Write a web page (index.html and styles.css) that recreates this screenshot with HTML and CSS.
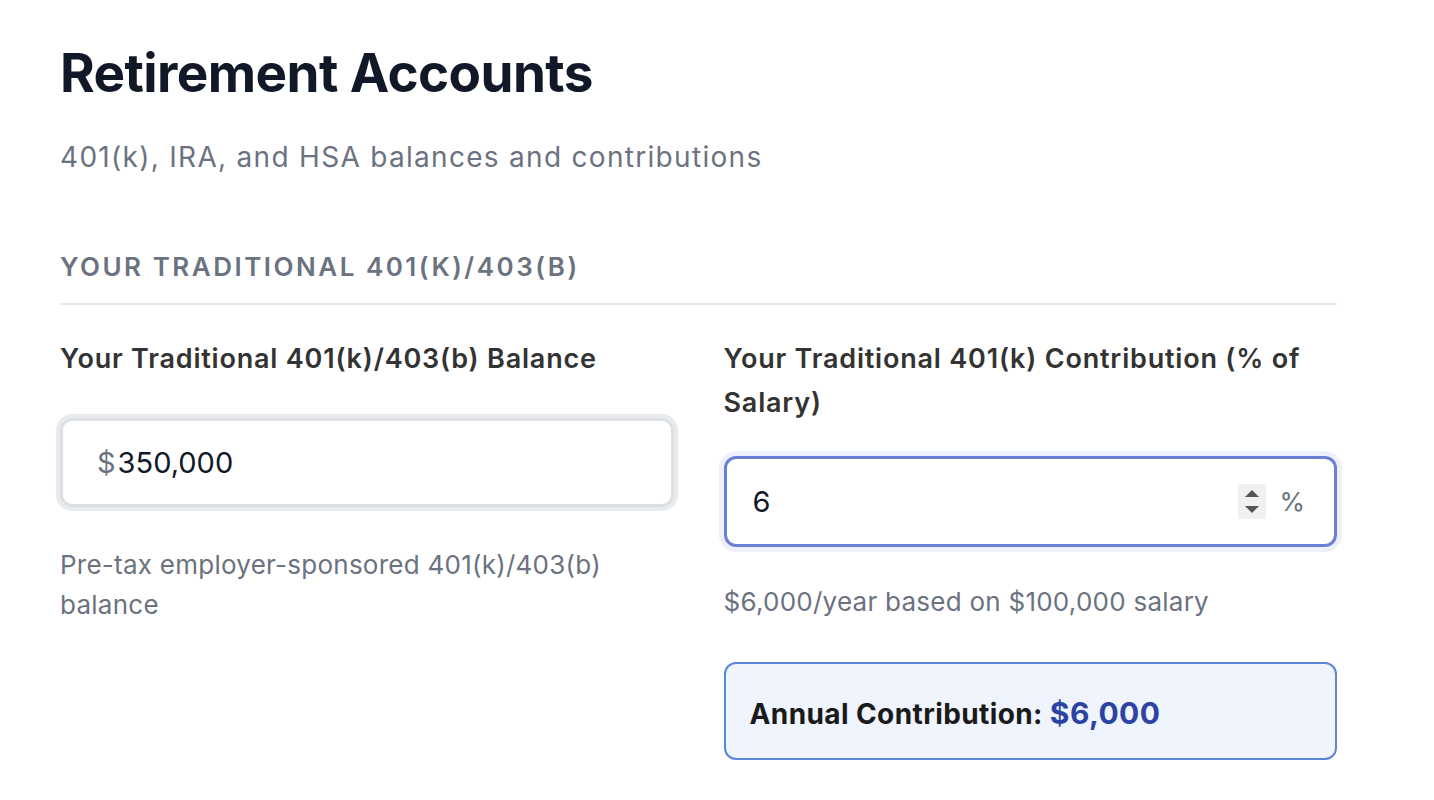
FILE: index.html
```html
<!DOCTYPE html>
<html>
    <head>
        <meta charset="utf-8" />
        <title>Retirement Accounts</title>
        <meta name="viewport" content="width=device-width, initial-scale=1">
        <link rel="stylesheet" href="styles.css">
    </head>
    <body>
        <main class="page">
            <h1 class="page-title">Retirement Accounts</h1>
            <p class="page-sub">401(k), IRA, and HSA balances and contributions</p>

            <section class="group">
                <h2 class="group-title">Your Traditional 401(k)/403(b)</h2>
                <div class="fields">
                    <div class="field">
                        <label class="field-label">Your Traditional 401(k)/403(b) Balance</label>
                        <div class="input-box">
                            <span class="prefix">$</span>
                            <span class="value">350,000</span>
                        </div>
                        <p class="hint">Pre-tax employer-sponsored 401(k)/403(b) balance</p>
                    </div>
                    <div class="field">
                        <label class="field-label">Your Traditional 401(k) Contribution (% of Salary)</label>
                        <div class="input-box focused">
                            <span class="value">6</span>
                            <span class="spinner">
                                <svg width="28" height="35" viewBox="0 0 28 35"><path d="M7 13 L21 13 L14 6 Z" fill="#555"/><path d="M7 22 L21 22 L14 29 Z" fill="#555"/></svg>
                            </span>
                            <span class="suffix">%</span>
                        </div>
                        <p class="hint">$6,000/year based on $100,000 salary</p>
                        <div class="result">Annual Contribution: <span class="result-amount">$6,000</span></div>
                    </div>
                </div>
            </section>
        </main>
    </body>
</html>
```

FILE: styles.css
```css
body {
    margin: 0;
    background: #ffffff;
    font-family: Inter, "Noto Sans", sans-serif;
    color: #111827;
}

.page {
    width: 1277px;
    padding: 41px 0 0 60px;
}

.page-title {
    margin: 0;
    font-size: 53px;
    line-height: 64px;
    font-weight: 700;
    color: #111827;
    letter-spacing: -0.6px;
}

.page-sub {
    margin: 32px 0 0;
    font-size: 28px;
    line-height: 40px;
    letter-spacing: 1.3px;
    color: #6b7280;
}

.group {
    margin-top: 74px;
}

.group-title {
    margin: 0;
    padding-bottom: 20px;
    border-bottom: 2px solid #e5e7eb;
    font-size: 26px;
    line-height: 32px;
    font-weight: 600;
    letter-spacing: 2.5px;
    text-transform: uppercase;
    color: #6b7280;
}

.fields {
    display: grid;
    grid-template-columns: 1fr 1fr;
    column-gap: 50px;
    padding-top: 32px;
}

.field-label {
    display: block;
    font-size: 27px;
    line-height: 44px;
    font-weight: 600;
    letter-spacing: 0.8px;
    color: #333333;
}

.input-box {
    display: flex;
    align-items: center;
    height: 89px;
    margin-top: 37px;
    padding: 0 30px 0 34px;
    box-sizing: border-box;
    border: 3px solid #dcdfe4;
    border-radius: 12px;
    box-shadow: 0 0 0 4px #e8eaee;
    font-size: 29px;
}

.input-box.focused {
    height: 91px;
    margin-top: 31px;
    padding: 0 29px 0 26px;
    border: 3px solid #6b7fd7;
    box-shadow: 0 0 0 5px #eef1fb;
}

.prefix {
    color: #6b7280;
    margin-right: 2px;
}

.value {
    flex: 1;
    color: #111827;
}

.spinner {
    display: flex;
    width: 28px;
    height: 35px;
    background: #f0f0f0;
    margin-right: 13px;
}

.suffix {
    color: #6b7280;
    font-size: 26px;
}

.hint {
    margin: 38px 0 0;
    font-size: 26px;
    line-height: 40px;
    letter-spacing: 0.25px;
    color: #6b7280;
}

.focused + .hint {
    margin-top: 35px;
}

.result {
    margin-top: 40px;
    height: 98px;
    box-sizing: border-box;
    padding: 0 24px;
    background: #eff4fd;
    border: 2px solid #5b86d6;
    border-radius: 12px;
    font-size: 28px;
    line-height: 98px;
    font-weight: 700;
    letter-spacing: 0.4px;
    color: #1a1a1a;
}

.result-amount {
    font-size: 30px;
    color: #2c43a6;
}
```
